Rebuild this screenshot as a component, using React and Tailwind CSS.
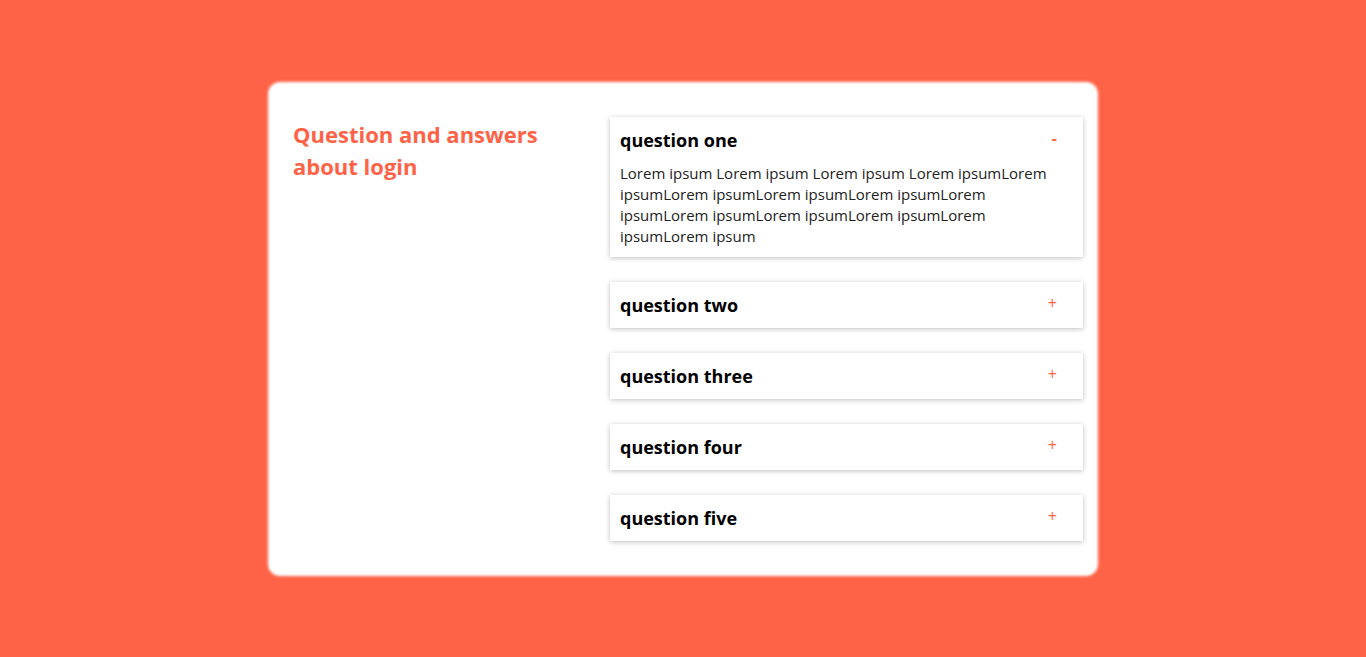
import React, { useState } from 'react';

const questions = [
  { id: 1, title: 'question one' },
  { id: 2, title: 'question two' },
  { id: 3, title: 'question three' },
  { id: 4, title: 'question four' },
  { id: 5, title: 'question five' },
];

const answer =
  'Lorem ipsum Lorem ipsum Lorem ipsum Lorem ipsumLorem ipsumLorem ipsumLorem ipsumLorem ipsumLorem ipsumLorem ipsumLorem ipsumLorem ipsumLorem ipsumLorem ipsum';

function Question({ q, open, onToggle }) {
  return (
    <div className="bg-white px-[10px] py-[10px] shadow-[0_1px_5px_rgba(0,0,0,0.25)]">
      <div className="flex items-start justify-between cursor-pointer" onClick={onToggle}>
        <h3 className="text-[18px] leading-[26px] font-bold text-black">{q.title}</h3>
        <span
          className={`mr-[16px] mt-[-2px] text-[16px] leading-[26px] text-[#ff6347] ${
            open ? 'font-bold' : ''
          }`}
        >
          {open ? '-' : '+'}
        </span>
      </div>
      {open && (
        <p className="mt-[10px] text-[15px] leading-[21px] text-[#222] pr-[8px]">{answer}</p>
      )}
    </div>
  );
}

export default function App() {
  const [openId, setOpenId] = useState(1);

  return (
    <div
      className="min-h-screen bg-[#ff6347] flex justify-center pt-[84px]"
      style={{ fontFamily: '"Open Sans", "Noto Sans", sans-serif' }}
    >
      <div className="w-[826px] h-[490px] bg-white rounded-[10px] shadow-[0_0_3px_2px_#fff] flex pt-[33px]">
        {/* Left */}
        <div className="w-[340px] pl-[23px] pt-[1px]">
          <h2 className="text-[22px] leading-[32px] font-bold text-[#ff6347] w-[270px]">
            Question and answers about login
          </h2>
        </div>

        {/* Right */}
        <div className="w-[473px] flex flex-col gap-[25px]">
          {questions.map((q) => (
            <Question
              key={q.id}
              q={q}
              open={openId === q.id}
              onToggle={() => setOpenId(openId === q.id ? null : q.id)}
            />
          ))}
        </div>
      </div>
    </div>
  );
}
